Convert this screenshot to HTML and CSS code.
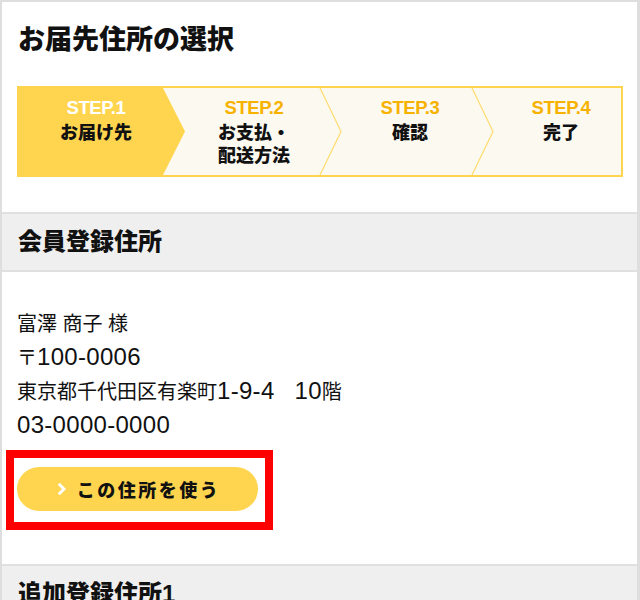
FILE: index.html
```html
<!DOCTYPE html>
<html lang="ja">
<head>
<meta charset="utf-8">
<title>お届先住所の選択</title>
<link rel="stylesheet" href="styles.css">
</head>
<body>
<div class="page">
  <div class="top">
    <h1 class="title">お届先住所の選択</h1>
    <div class="steps">
      <svg class="steps-bg" width="602" height="87" viewBox="0 0 602 87" aria-hidden="true">
        <polygon points="0,0 144,0 166,43.5 144,87 0,87" fill="#ffd54f"/>
        <polyline points="301,0 322,43.5 301,87" fill="none" stroke="#ffdc6e" stroke-width="1.2"/>
        <polyline points="453,0 474,43.5 453,87" fill="none" stroke="#ffdc6e" stroke-width="1.2"/>
      </svg>
      <div class="step step-1 is-active">
        <div class="step-num">STEP.1</div>
        <div class="step-name">お届け先</div>
      </div>
      <div class="step step-2">
        <div class="step-num">STEP.2</div>
        <div class="step-name">お支払・<br>配送方法</div>
      </div>
      <div class="step step-3">
        <div class="step-num">STEP.3</div>
        <div class="step-name">確認</div>
      </div>
      <div class="step step-4">
        <div class="step-num">STEP.4</div>
        <div class="step-name">完了</div>
      </div>
    </div>
  </div>

  <section class="section">
    <h2 class="section-head">会員登録住所</h2>
    <div class="section-body">
      <p class="address">富澤 商子 様<br>〒<span class="num">100-0006</span><br>東京都千代田区有楽町<span class="num">1-9-4</span>　<span class="num">10</span>階<br><span class="num">03-0000-0000</span></p>
      <div class="btn-wrap">
        <button class="btn" type="button">
          <svg class="btn-arrow" width="9" height="14" viewBox="0 0 9 14" aria-hidden="true">
            <polyline points="1.8,1.8 7,7 1.8,12.2" fill="none" stroke="#fff" stroke-width="3" stroke-linecap="butt" stroke-linejoin="miter"/>
          </svg>
          <span>この住所を使う</span>
        </button>
        <div class="highlight"></div>
      </div>
    </div>
  </section>

  <section class="section">
    <h2 class="section-head">追加登録住所1</h2>
  </section>
</div>
</body>
</html>
```

FILE: styles.css
```css
html, body {
  margin: 0;
  padding: 0;
  background: #fff;
}
body {
  font-family: "Liberation Sans", "Noto Sans CJK JP", sans-serif;
  color: #111;
}
.page {
  width: 640px;
  height: 600px;
  box-sizing: border-box;
  border-top: 2px solid #dedede;
  border-left: 2px solid #dedede;
  border-right: 3px solid #dedede;
  overflow: hidden;
}
.top {
  padding: 20px 16px 35px 15px;
}
.title {
  margin: 0;
  font-size: 27px;
  line-height: 36px;
  font-weight: 900;
  padding-left: 1px;
}
.steps {
  position: relative;
  margin-top: 28px;
  width: 606px;
  height: 91px;
  box-sizing: border-box;
  border: 2px solid #ffd54f;
  background: #fcf9f0;
  display: flex;
}
.steps-bg {
  position: absolute;
  left: 0;
  top: 0;
}
.step {
  position: relative;
  box-sizing: border-box;
  padding-top: 8px;
  text-align: center;
}
.step-1 { width: 154px; }
.step-2 { width: 162px; }
.step-3 { width: 150px; }
.step-4 { width: 136px; padding-left: 16px; }
.step-num {
  font-size: 18.5px;
  line-height: 24px;
  font-weight: bold;
  color: #f7b200;
  letter-spacing: -0.4px;
}
.is-active .step-num {
  color: #fff;
}
.step-name {
  margin-top: 2px;
  font-size: 18px;
  line-height: 23px;
  font-weight: 900;
  color: #111;
}
.section-head {
  margin: 0;
  height: 56px;
  line-height: 56px;
  background: #efefef;
  border-top: 2px solid #e0e0e0;
  border-bottom: 2px solid #e0e0e0;
  font-size: 24px;
  font-weight: 900;
  padding-left: 16px;
}
.section-body {
  padding: 35px 15px 53px;
}
.address {
  margin: 0;
  font-size: 20px;
  line-height: 34px;
  color: #111;
}
.num {
  font-family: "Liberation Sans", sans-serif;
  font-size: 24px;
  line-height: 1;
  letter-spacing: 0.3px;
}
.btn-wrap {
  position: relative;
  margin-top: 24px;
  width: 241px;
}
.btn {
  display: flex;
  align-items: center;
  justify-content: center;
  width: 241px;
  height: 44px;
  border: none;
  border-radius: 22px;
  background: #ffd54f;
  font-family: "Liberation Sans", "Noto Sans CJK JP", sans-serif;
  font-size: 18px;
  font-weight: 900;
  letter-spacing: 2.5px;
  color: #111;
  padding: 0 0 0 2px;
}
.btn-arrow {
  margin-right: 11px;
}
.highlight {
  position: absolute;
  left: -11px;
  top: -17px;
  width: 267px;
  height: 80px;
  box-sizing: border-box;
  border: 8px solid #ff0000;
}
```
